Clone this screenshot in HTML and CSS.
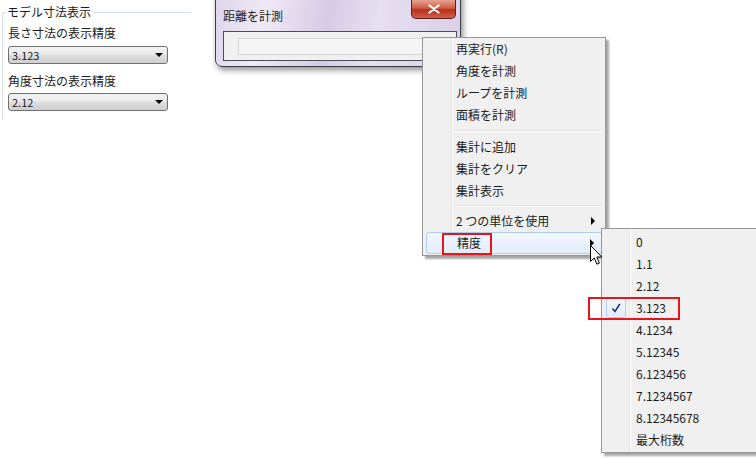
FILE: index.html
```html
<!DOCTYPE html>
<html lang="ja">
<head>
  <meta charset="UTF-8" />
  <title>距離を計測</title>
  <link rel="stylesheet" href="styles.css">
</head>
<body>
<div class="desktop">

  <!-- left settings panel -->
  <fieldset class="group">
    <legend>モデル寸法表示</legend>
    <div class="field-label first">長さ寸法の表示精度</div>
    <div class="combo"><span>3.123</span><i class="combo-arrow"></i></div>
    <div class="field-label">角度寸法の表示精度</div>
    <div class="combo last"><span>2.12</span><i class="combo-arrow"></i></div>
  </fieldset>

  <!-- measure dialog -->
  <div class="dialog">
    <div class="dialog-title">
      <span>距離を計測</span>
      <div class="close-btn">
        <svg width="14" height="10" viewBox="0 0 14 10"><path d="M2.5 1.5 L11.5 8.5 M11.5 1.5 L2.5 8.5" stroke="#fff" stroke-width="2.2" stroke-linecap="round"/></svg>
      </div>
    </div>
    <div class="dialog-body">
      <div class="dialog-input"></div>
    </div>
  </div>

  <!-- context menu -->
  <div class="menu main-menu">
    <div class="menu-item">再実行(R)</div>
    <div class="menu-item">角度を計測</div>
    <div class="menu-item">ループを計測</div>
    <div class="menu-item">面積を計測</div>
    <div class="menu-sep sep-a"></div>
    <div class="menu-item">集計に追加</div>
    <div class="menu-item">集計をクリア</div>
    <div class="menu-item">集計表示</div>
    <div class="menu-sep sep-b"></div>
    <div class="menu-item has-sub">2&nbsp;つの単位を使用</div>
    <div class="menu-item has-sub active"><span class="marked mark-a">精度</span></div>
  </div>

  <!-- precision submenu -->
  <div class="menu sub-menu">
    <div class="menu-item">0</div>
    <div class="menu-item">1.1</div>
    <div class="menu-item">2.12</div>
    <div class="menu-item checked">
      <span class="check">
        <svg width="10" height="10" viewBox="0 0 10 10"><path d="M1.5 5.5 L4 8.5 L8.8 1" fill="none" stroke="#1d2f8c" stroke-width="1.6"/></svg>
      </span>
      3.123
      <span class="mark-b"></span>
    </div>
    <div class="menu-item">4.1234</div>
    <div class="menu-item">5.12345</div>
    <div class="menu-item">6.123456</div>
    <div class="menu-item">7.1234567</div>
    <div class="menu-item">8.12345678</div>
    <div class="menu-item">最大桁数</div>
  </div>

  <svg class="cursor" width="13" height="21" viewBox="0 0 13 21">
    <path d="M0.5 0.5 L0.5 16.5 L4.3 12.9 L6.9 19.2 L9.4 18.1 L6.8 12 L11.8 12 Z" fill="#fff" stroke="#000" stroke-width="1"/>
  </svg>

</div>
</body>
</html>
```

FILE: styles.css
```css
body {
  margin: 0;
  background: #fff;
  font-family: "Noto Sans CJK JP", "Noto Sans", sans-serif;
  font-size: 12px;
  color: #1a1a1a;
}

.desktop {
  position: relative;
  width: 756px;
  height: 458px;
  overflow: hidden;
}

/* ---- left group box ---- */
.group {
  margin: 5px 0 0 2px;
  padding: 0 0 9px 5px;
  width: 183px;
  border: 1px solid #d5dfe5;
  border-right: 0;
  border-bottom: 0;
  border-top-left-radius: 3px;
}

.group legend {
  padding: 0 2px 0 0;
  margin-left: -1px;
  line-height: 14px;
  font-size: 12px;
}

.field-label {
  line-height: 16px;
  margin-top: 9px;
}

.field-label.first {
  margin-top: 6px;
}

.combo {
  display: flex;
  align-items: center;
  justify-content: space-between;
  width: 155px;
  height: 16px;
  margin-top: 5px;
  padding: 0 0 0 3px;
  border: 1px solid #707070;
  border-radius: 3px;
  background: linear-gradient(#f2f2f2, #ebebeb 45%, #dddddd 50%, #cfcfcf);
  font-size: 11px;
  box-sizing: content-box;
}

.combo.last {
  margin-top: 4px;
}

.combo span {
  line-height: 16px;
}

.combo-arrow {
  width: 0;
  height: 0;
  margin-right: 4px;
  border-left: 4px solid transparent;
  border-right: 4px solid transparent;
  border-top: 4px solid #000;
}

/* ---- dialog ---- */
.dialog {
  position: absolute;
  left: 215px;
  top: -10px;
  width: 246px;
  height: 77px;
  border: 1px solid #3c3c46;
  border-radius: 7px;
  background: linear-gradient(100deg, #ddd4ea 0%, #efe9f5 20%, #d6cbe6 45%, #e6dff0 65%, #d9cfe8 100%);
  box-shadow: 2px 3px 6px rgba(0,0,0,0.45);
  box-sizing: border-box;
}

.dialog-title {
  display: flex;
  justify-content: space-between;
  height: 40px;
  padding: 0 4px 0 7px;
}

.dialog-title span {
  margin-top: 17px;
  line-height: 16px;
  font-size: 12px;
  color: #1e1e1e;
}

.close-btn {
  display: flex;
  align-items: center;
  justify-content: center;
  width: 45px;
  height: 19px;
  margin-top: 9px;
  border: 1px solid #5a2020;
  border-top: 0;
  border-radius: 0 0 5px 5px;
  background: linear-gradient(#e6a593, #cf5a44 45%, #b8301c 55%, #d2604a);
  box-sizing: border-box;
}

.dialog-body {
  margin: 0 3px 0 7px;
  height: 30px;
  border: 1px solid #4c4c58;
  background: #f0f0f0;
  box-sizing: border-box;
  padding: 6px 0 0 14px;
}

.dialog-input {
  height: 15px;
  border: 1px solid #d4d4d4;
  background: #f5f5f5;
}

/* ---- menus ---- */
.menu {
  position: absolute;
  background: #f0f0f0;
  border: 1px solid #979797;
  box-shadow: 3px 3px 2px rgba(0,0,0,0.35);
  padding: 0 2px 1px 2px;
  box-sizing: border-box;
}

.menu::before {
  content: "";
  position: absolute;
  top: 0;
  bottom: 0;
  width: 1px;
  background: #e2e3e3;
  border-right: 1px solid #fff;
}

.main-menu {
  left: 422px;
  top: 37px;
  width: 184px;
  height: 219px;
}

.main-menu::before {
  left: 28px;
}

.sub-menu {
  left: 601px;
  top: 228px;
  width: 170px;
  height: 225px;
  padding-top: 2px;
}

.sub-menu::before {
  left: 27px;
}

.menu-item {
  position: relative;
  height: 22px;
  line-height: 22px;
  padding-left: 31px;
  white-space: nowrap;
}

.sub-menu .menu-item {
  padding-left: 32px;
}

.menu-sep {
  margin-left: 28px;
  border-top: 1px solid #e0e0e0;
  border-bottom: 1px solid #fff;
}

.sep-a {
  margin-top: 4px;
  margin-bottom: 4px;
}

.sep-b {
  margin-top: 3px;
  margin-bottom: 3px;
}

.has-sub::after {
  content: "";
  position: absolute;
  right: 8px;
  top: 7px;
  border-top: 4px solid transparent;
  border-bottom: 4px solid transparent;
  border-left: 4px solid #000;
}

.active {
  margin: 0 1px;
  padding-left: 30px;
  border: 1px solid #aeccf0;
  border-radius: 3px;
  background: linear-gradient(#f2f7fd, #e2edfa);
  height: 20px;
  line-height: 20px;
}

.active.has-sub::after {
  right: 7px;
  top: 6px;
}

.marked {
  position: relative;
}

.mark-a::after {
  content: "";
  position: absolute;
  left: -15px;
  top: -1px;
  width: 46px;
  height: 18px;
  border: 2px solid #e8141c;
}

.check {
  position: absolute;
  left: 2px;
  top: 1px;
  width: 18px;
  height: 18px;
  display: flex;
  align-items: center;
  justify-content: center;
  border: 1px solid #aeccf0;
  border-radius: 3px;
  background: linear-gradient(#f2f7fd, #e2edfa);
}

.mark-b {
  position: absolute;
  left: -16px;
  top: 0;
  width: 88px;
  height: 19px;
  border: 2px solid #e8141c;
}

.cursor {
  position: absolute;
  left: 590px;
  top: 245px;
}
```
